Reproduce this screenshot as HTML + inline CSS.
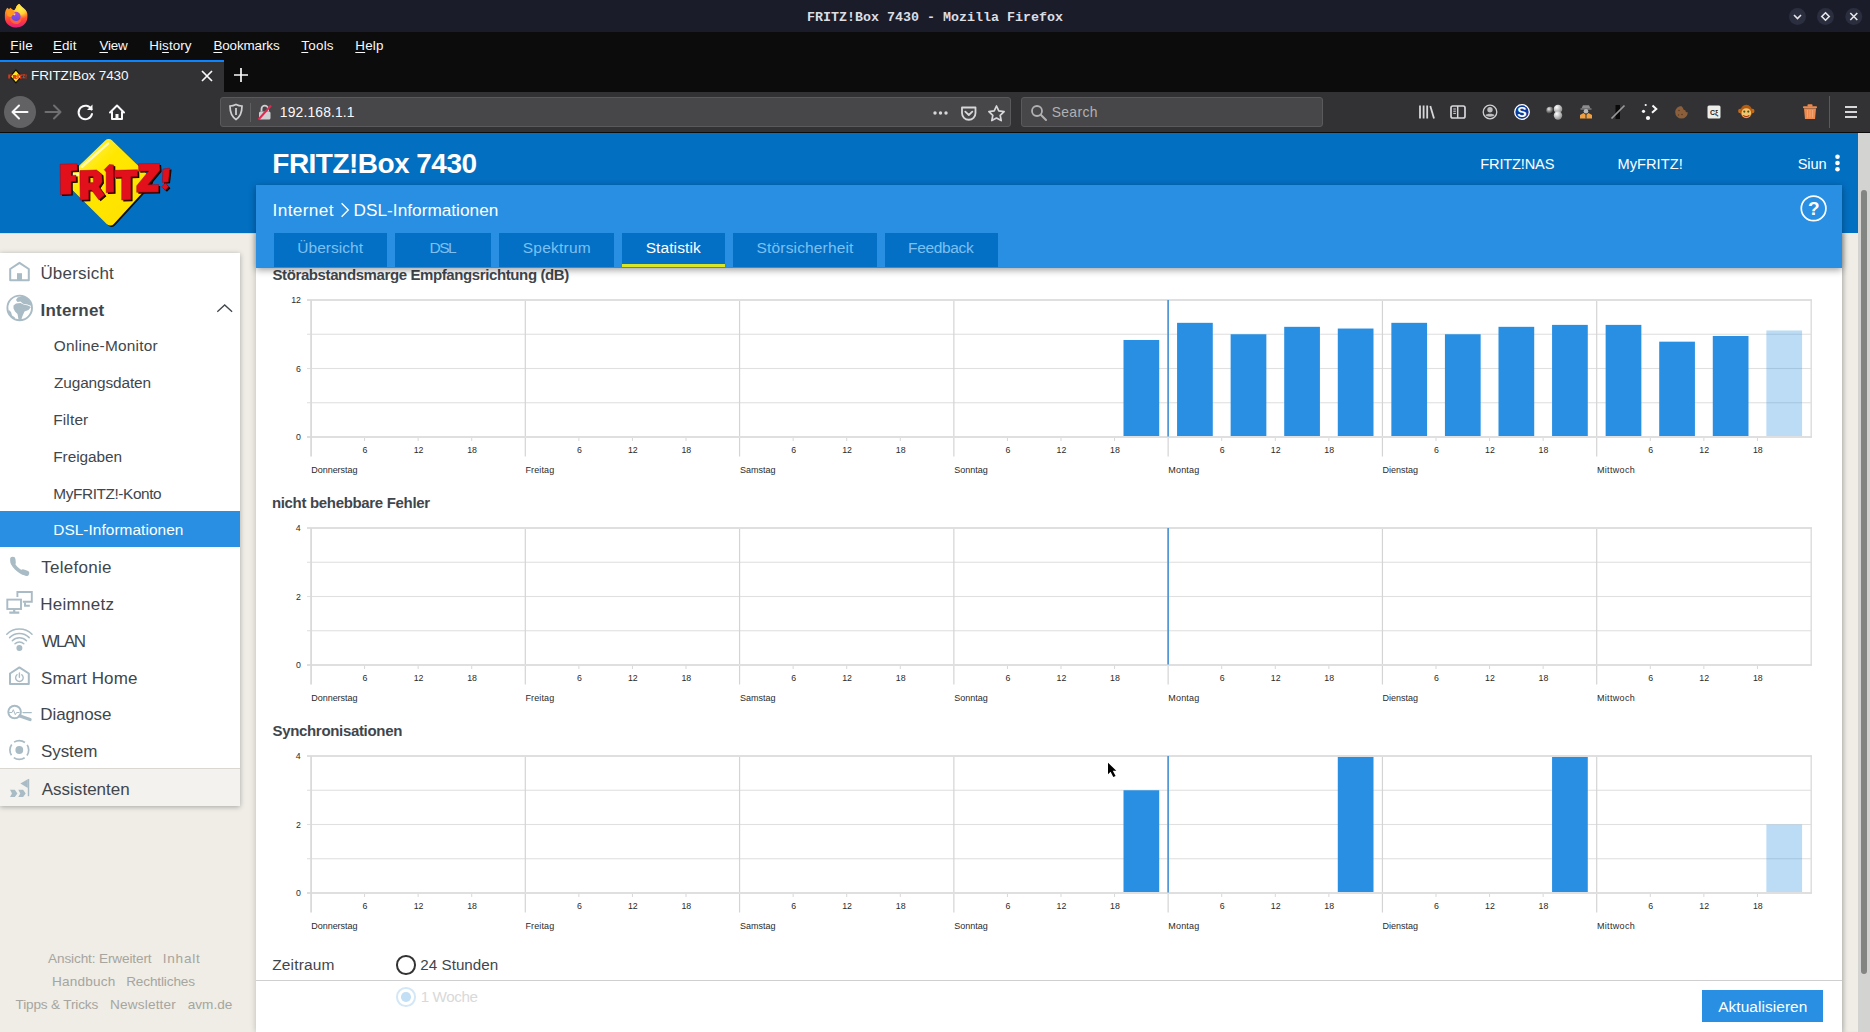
<!DOCTYPE html>
<html lang="de">
<head>
<meta charset="utf-8">
<title>FRITZ!Box 7430</title>
<style>
*{box-sizing:border-box;margin:0;padding:0}
html,body{width:1870px;height:1032px;overflow:hidden;background:#efede6;font-family:"Liberation Sans",sans-serif;}
body{position:relative}
.abs{position:absolute}
/* ---------- window chrome ---------- */
#titlebar{position:absolute;left:0;top:0;width:1870px;height:32px;background:#1a1c2a;}
#titlebar .t{position:absolute;left:0;width:1870px;top:0;height:32px;line-height:35px;text-align:center;color:#dddde4;font-family:"Liberation Mono",monospace;font-weight:bold;font-size:13.3px;letter-spacing:0.02px}
#menubar{position:absolute;left:0;top:32px;width:1870px;height:28px;background:#0c0c0d;color:#f9f9fa;font-size:14.5px}
#menubar span{position:absolute;top:0;line-height:27px;white-space:nowrap}
.tx u{text-decoration:underline;text-underline-offset:1.500px;text-decoration-thickness:1px}
#tabbar{position:absolute;left:0;top:60px;width:1870px;height:32px;background:#0c0c0d}
#tab{position:absolute;left:0;top:0;width:224px;height:32px;background:#323234;border-top:2px solid #0a84ff;color:#f9f9fa;font-size:14.5px}
#navbar{position:absolute;left:0;top:92px;width:1870px;height:40px;background:#323234}
#navline{position:absolute;left:0;top:132px;width:1870px;height:1px;background:#0c0c0d}
.field{position:absolute;top:5px;height:30px;background:#474749;border:1px solid #5a5a5d;border-radius:3px;color:#f9f9fa;font-size:14.5px}
/* ---------- page ---------- */
.tx{position:absolute;white-space:nowrap}
#hdr{position:absolute;left:0;top:133px;width:1858px;height:100px;background:#036fc1}
#rightbg{position:absolute;left:1842px;top:233px;width:16px;height:799px;background:#efede6;box-shadow:inset 4px 0 4px -2px rgba(0,0,0,.12)}
#content{position:absolute;left:256px;top:233px;width:1586px;height:799px;background:#fff;box-shadow:0 0 6px rgba(0,0,0,.22)}
#sub{position:absolute;left:256px;top:185px;width:1586px;height:82.500px;background:#288fe2;box-shadow:0 2px 7px rgba(0,0,0,.38)}
#foot{position:absolute;left:256px;top:980px;width:1586px;height:52px;background:rgba(255,255,255,.82);border-top:1px solid #cfcfcf}
#side{position:absolute;left:0;top:253px;width:240px;height:553px;background:#fff;box-shadow:0 1px 5px rgba(0,0,0,.30)}
#scroll{position:absolute;left:1858px;top:133px;width:12px;height:899px;background:#d3d3d2}
#thumb{position:absolute;left:1861px;top:190px;width:6.200px;height:784px;background:#838582;border-radius:3.100px}
</style>
</head>
<body>

<!-- ===== window title bar ===== -->
<div id="titlebar">
  <svg class="abs" style="left:0;top:0" width="40" height="32" viewBox="0 0 1290 1032">
    <defs>
      <linearGradient id="ffb" x1="0" y1="0" x2="0" y2="1"><stop offset="0" stop-color="#ffb01f"/><stop offset=".35" stop-color="#ff8a1f"/><stop offset=".7" stop-color="#ff3b3f"/><stop offset="1" stop-color="#e01a8a"/></linearGradient>
      <radialGradient id="ffy" cx="660" cy="280" r="330" gradientUnits="userSpaceOnUse"><stop offset="0" stop-color="#fff14a"/><stop offset=".55" stop-color="#ffd83a" stop-opacity=".9"/><stop offset="1" stop-color="#ffb030" stop-opacity="0"/></radialGradient>
      <linearGradient id="ffp" x1="0" y1="0" x2="0" y2="1"><stop offset="0" stop-color="#b845d8"/><stop offset="1" stop-color="#5a4fe6"/></linearGradient>
      <clipPath id="ffc"><path d="M620 118C660 190 760 250 830 330C880 400 900 480 890 560C870 760 710 895 520 892C310 888 150 740 150 540C150 440 170 350 205 290L240 250L290 295L335 250L395 305L445 332C480 320 505 290 515 250C525 195 570 150 620 118Z"/></clipPath>
    </defs>
    <g clip-path="url(#ffc)">
      <rect x="100" y="80" width="850" height="850" fill="url(#ffb)"/>
      <rect x="100" y="80" width="850" height="850" fill="url(#ffy)"/>
      <circle cx="515" cy="530" r="150" fill="url(#ffp)"/>
      <path d="M200 330L420 330L500 440L470 480C420 470 380 500 360 560L240 520Z" fill="#ff9a1c"/>
      <path d="M430 470L505 445L470 500Z" fill="#ffd0c0"/>
      <path d="M360 560C380 640 450 690 540 680C640 670 690 600 680 500C720 600 690 740 560 770C440 790 340 720 320 600Z" fill="#ff6a38" opacity=".85"/>
    </g>
  </svg>
  <div class="t">FRITZ!Box 7430 - Mozilla Firefox</div>
  <svg class="abs" style="left:1788px;top:7px" width="78" height="19" viewBox="0 0 78 19">
    <circle cx="9.500" cy="9.500" r="8.500" fill="#2b2e3e"/><circle cx="37.500" cy="9.500" r="8.500" fill="#2b2e3e"/><circle cx="65.800" cy="9.500" r="8.500" fill="#2b2e3e"/>
    <path d="M6 8l3.500 3.500L13 8" fill="none" stroke="#e6e6ea" stroke-width="1.600"/>
    <path d="M37.500 5.800l3.700 3.700l-3.700 3.700l-3.700-3.700z" fill="none" stroke="#e6e6ea" stroke-width="1.600"/>
    <path d="M62.300 6l7 7M69.300 6l-7 7" fill="none" stroke="#e6e6ea" stroke-width="1.600"/>
  </svg>
</div>
<!-- ===== menu bar ===== -->
<div id="menubar"></div>
<!-- ===== tab bar ===== -->
<div id="tabbar">
  <div id="tab">
    <svg class="abs" style="left:6px;top:6px" width="22" height="18" viewBox="6 68 22 18">
      <path d="M15.900 69.900L21.500 76.400L15.900 82.900L10.300 76.400Z" fill="#ffe61e" stroke="#0a0a0a" stroke-width="1.200" stroke-linejoin="round"/>
      <path d="M8.300 74.500h4.200v1h-2.600v.9h2v.9h-2v1.300h-1.600zM13 75h3.200l.7 1.600l-.8.900l1.100 1.500h-1.700l-.9-1.300v1.300H13zM17.300 74.200h1.400v4.300h-1.400zM19 74.600h3.500v1.100h-1v3h-1.500v-3H19zM22.700 74.300h2.600l-1.500 3h1.400v1h-3l1.500-3h-1zM25.600 74.500h1l-.2 2.500h-.7zM25.600 77.500h.9v.9h-.9z" fill="#e23a1a"/>
    </svg>
    <svg class="abs" style="left:201px;top:8px" width="12" height="12" viewBox="0 0 12 12"><path d="M1 1l10 10M11 1L1 11" stroke="#f9f9fa" stroke-width="1.700" fill="none"/></svg>
  </div>
  <svg class="abs" style="left:233px;top:7px" width="16" height="16" viewBox="0 0 16 16"><path d="M8 1v14M1 8h14" stroke="#f9f9fa" stroke-width="1.700" fill="none"/></svg>
</div>
<!-- ===== nav bar ===== -->
<div id="navbar">
  <svg class="abs" style="left:0;top:0" width="140" height="40" viewBox="0 0 140 40">
    <circle cx="20" cy="20" r="16" fill="#626265"/>
    <path d="M27.500 20H13M19 13.500L12.500 20L19 26.500" fill="none" stroke="#f9f9fa" stroke-width="2" stroke-linecap="round" stroke-linejoin="round"/>
    <path d="M45.500 20H60M54 13.500L60.500 20L54 26.500" fill="none" stroke="#6f6f72" stroke-width="2" stroke-linecap="round" stroke-linejoin="round"/>
    <path d="M91.500 17.500A6.800 6.800 0 1 0 92 22" fill="none" stroke="#f9f9fa" stroke-width="2" stroke-linecap="round"/>
    <path d="M92.500 12.500v5.500h-5.500z" fill="#f9f9fa"/>
    <path d="M110 20.500L117 13.500L124 20.500M112 19.500V27h10V19.500" fill="none" stroke="#f9f9fa" stroke-width="2" stroke-linecap="round" stroke-linejoin="round"/>
    <rect x="115.500" y="22" width="3" height="5" fill="#f9f9fa"/>
  </svg>
  <div class="field" style="left:220px;width:791px">
    <svg class="abs" style="left:6px;top:5px" width="60" height="19" viewBox="0 0 60 19">
      <path d="M9 1.500c2 1 4 1.500 6 1.500c0 6-1.500 10.500-6 13.500C4.500 13.500 3 9 3 3c2 0 4-0.500 6-1.500z" fill="none" stroke="#cfcfd2" stroke-width="1.700"/>
      <path d="M9 5v7" stroke="#cfcfd2" stroke-width="1.800"/>
      <path d="M23.500 0v19" stroke="#5f5f62" stroke-width="1"/>
      <rect x="32" y="8.500" width="11.500" height="8" rx="1.500" fill="#cfcfd2"/>
      <path d="M34.500 8.500V6a3.300 3.300 0 0 1 6.600 0v2.500" fill="none" stroke="#cfcfd2" stroke-width="1.800"/>
      <path d="M31.500 16.500L44 2.500" stroke="#e22850" stroke-width="2"/>
    </svg>
    <svg class="abs" style="left:708px;top:5px" width="80" height="20" viewBox="0 0 80 20">
      <circle cx="6" cy="10" r="1.700" fill="#d7d7db"/><circle cx="11.500" cy="10" r="1.700" fill="#d7d7db"/><circle cx="17" cy="10" r="1.700" fill="#d7d7db"/>
      <path d="M33 4.500h13.500v5.500a6.750 6.750 0 0 1-13.500 0z" fill="none" stroke="#d7d7db" stroke-width="1.800" stroke-linejoin="round"/>
      <path d="M36.300 8.700l3.500 3.300l3.500-3.300" fill="none" stroke="#d7d7db" stroke-width="1.800" stroke-linecap="round" stroke-linejoin="round"/>
      <path d="M67.500 3l2.300 4.900l5.300.7l-3.900 3.700l1 5.300l-4.700-2.600l-4.700 2.600l1-5.300l-3.900-3.700l5.300-.7z" fill="none" stroke="#d7d7db" stroke-width="1.700" stroke-linejoin="round"/>
    </svg>
  </div>
  <div class="field" style="left:1021px;width:302px">
    <svg class="abs" style="left:8px;top:6px" width="18" height="18" viewBox="0 0 18 18"><circle cx="7" cy="7" r="5" fill="none" stroke="#b1b1b3" stroke-width="1.800"/><path d="M10.800 10.800L16 16" stroke="#b1b1b3" stroke-width="2" stroke-linecap="round"/></svg>
  </div>

  <!-- right toolbar icons; svg origin at x=1410,y=96 (navbar top=92 => top:4px) -->
  <svg class="abs" style="left:1410px;top:4px" width="460" height="32" viewBox="0 0 460 32">
    <defs>
      <radialGradient id="ball1" cx="35%" cy="30%" r="70%"><stop offset="0" stop-color="#e8e8e8"/><stop offset="1" stop-color="#222"/></radialGradient>
      <radialGradient id="ball2" cx="35%" cy="30%" r="75%"><stop offset="0" stop-color="#ffffff"/><stop offset="1" stop-color="#8a8a8a"/></radialGradient>
    </defs>
    <!-- library -->
    <path d="M10 9.500v13M13.600 9.500v13M17.200 9.500v13" stroke="#d7d7db" stroke-width="1.800"/>
    <path d="M20.300 10l3.700 12.500" stroke="#d7d7db" stroke-width="1.800"/>
    <!-- sidebar -->
    <rect x="41" y="10" width="14" height="12" rx="1.800" fill="none" stroke="#d7d7db" stroke-width="1.700"/>
    <path d="M47.700 10v12" stroke="#d7d7db" stroke-width="1.500"/>
    <path d="M43.300 13h2.600M43.300 15.200h2.600M43.300 17.400h2.600" stroke="#d7d7db" stroke-width="1"/>
    <!-- account -->
    <circle cx="80" cy="16" r="6.800" fill="none" stroke="#cfcfd2" stroke-width="1.300"/>
    <circle cx="80" cy="13.800" r="2.700" fill="#bdbdc0"/>
    <path d="M75.400 19.200c1.200-2 8-2 9.200 0c-1 1.900-8.200 1.900-9.200 0z" fill="#bdbdc0"/>
    <!-- S -->
    <circle cx="112" cy="16" r="7.300" fill="#0d3b9c" stroke="#fff" stroke-width="1.300"/>
    <text x="112" y="21" text-anchor="middle" font-family="Liberation Sans" font-weight="bold" font-size="14" fill="#fff">S</text>
    <!-- balls -->
    <circle cx="148" cy="13" r="4.300" fill="url(#ball2)"/>
    <circle cx="140" cy="14.500" r="3.700" fill="url(#ball1)"/>
    <circle cx="148" cy="19.500" r="4.200" fill="url(#ball2)"/>
    <!-- spy -->
    <path d="M171.500 12.500h9l-1.500-3.200h-6z" fill="#8d8d90"/>
    <rect x="170.500" y="12.200" width="11" height="1.600" fill="#77777a"/>
    <circle cx="176" cy="15.200" r="2.300" fill="#b9b9bb"/>
    <path d="M170 22.500v-3.500l3.500-2l2.500 2l2.500-2l3.500 2v3.500z" fill="#f0a040"/>
    <path d="M176 18.500v4" stroke="#323234" stroke-width="1"/>
    <!-- slash -->
    <rect x="205.500" y="9" width="4.500" height="14" fill="#0a0a0a"/>
    <path d="M201.500 22.500L214.500 9.500" stroke="#98989b" stroke-width="1.700"/>
    <!-- arrow dots -->
    <circle cx="235.700" cy="9" r="1.100" fill="#f9f9fa"/>
    <circle cx="233.500" cy="15.300" r="1.600" fill="#f9f9fa"/>
    <circle cx="238" cy="22" r="2.100" fill="#f9f9fa"/>
    <path d="M242.500 9.500l3.800 3.500l-4.300 3.800" fill="none" stroke="#f9f9fa" stroke-width="2"/>
    <!-- cookie -->
    <path d="M271.500 10a6.300 6.300 0 1 0 6.300 6.300c-1.600.3-2.600-.8-2.400-2.100c-1.500.1-2.600-1-2.300-2.600c-.9-.2-1.500-.8-1.600-1.600z" fill="#8b5e3c"/>
    <circle cx="269" cy="14.500" r=".8" fill="#5c3b22"/><circle cx="272" cy="18.500" r=".8" fill="#5c3b22"/><circle cx="268.500" cy="19" r=".7" fill="#5c3b22"/>
    <!-- CE -->
    <rect x="297.500" y="9.500" width="13" height="13" rx="1.500" fill="#ecece8"/>
    <text x="304" y="18.500" text-anchor="middle" font-family="Liberation Sans" font-weight="bold" font-size="7" fill="#222">C&#958;</text>
    <!-- monkey -->
    <circle cx="330.300" cy="15" r="2.200" fill="#c96a14"/><circle cx="342.300" cy="15" r="2.200" fill="#c96a14"/>
    <ellipse cx="336.300" cy="15.500" rx="6" ry="6.800" fill="#b65a10"/>
    <ellipse cx="336.300" cy="17" rx="4.800" ry="4.800" fill="#f6c36a"/>
    <circle cx="334.300" cy="15.600" r="1.100" fill="#3a5a22"/><circle cx="338.300" cy="15.600" r="1.100" fill="#3a5a22"/>
    <path d="M333.300 19.300c1.600 1.500 4.400 1.500 6 0" fill="none" stroke="#a03010" stroke-width="1.100"/>
    <!-- trash -->
    <path d="M394 12.500h12l-1 10.500h-10z" fill="#ee8a4e"/>
    <rect x="393" y="10.300" width="14" height="2" rx=".8" fill="#ee8a4e"/>
    <rect x="397.500" y="8.300" width="5" height="2.500" rx=".8" fill="#ee8a4e"/>
    <path d="M397.500 14v7.500M400 14v7.500M402.500 14v7.500" stroke="#f4a777" stroke-width=".9"/>
    <!-- separator -->
    <path d="M419.500 0v32" stroke="#5a5a5d" stroke-width="1"/>
    <!-- hamburger -->
    <path d="M435 11h12M435 16h12M435 21h12" stroke="#d7d7db" stroke-width="1.800"/>
  </svg>
</div>
<div id="navline"></div>

<div id="hdr"></div>
<div class="abs" style="left:0;top:232.600px;width:256px;height:1px;background:#bfe3f4"></div>
<div id="rightbg"></div>
<div id="content"></div>
<svg class="abs" style="left:0;top:0" width="1870" height="1032" viewBox="0 0 1870 1032"><rect x="307.0" y="333.70" width="1504.0" height="1.1" fill="#e0e0e0"/><rect x="307.0" y="367.95" width="1504.0" height="1.1" fill="#e0e0e0"/><rect x="307.0" y="402.20" width="1504.0" height="1.1" fill="#e0e0e0"/><rect x="524.69" y="300" width="1.2" height="156.5" fill="#d4d4d4"/><rect x="738.97" y="300" width="1.2" height="156.5" fill="#d4d4d4"/><rect x="953.26" y="300" width="1.2" height="156.5" fill="#d4d4d4"/><rect x="1167.54" y="300" width="1.2" height="156.5" fill="#d4d4d4"/><rect x="1381.83" y="300" width="1.2" height="156.5" fill="#d4d4d4"/><rect x="1596.11" y="300" width="1.2" height="156.5" fill="#d4d4d4"/><rect x="364.07" y="437.0" width="1" height="4" fill="#d8d8d8"/><rect x="417.64" y="437.0" width="1" height="4" fill="#d8d8d8"/><rect x="471.21" y="437.0" width="1" height="4" fill="#d8d8d8"/><rect x="578.36" y="437.0" width="1" height="4" fill="#d8d8d8"/><rect x="631.93" y="437.0" width="1" height="4" fill="#d8d8d8"/><rect x="685.50" y="437.0" width="1" height="4" fill="#d8d8d8"/><rect x="792.64" y="437.0" width="1" height="4" fill="#d8d8d8"/><rect x="846.21" y="437.0" width="1" height="4" fill="#d8d8d8"/><rect x="899.79" y="437.0" width="1" height="4" fill="#d8d8d8"/><rect x="1006.93" y="437.0" width="1" height="4" fill="#d8d8d8"/><rect x="1060.50" y="437.0" width="1" height="4" fill="#d8d8d8"/><rect x="1114.07" y="437.0" width="1" height="4" fill="#d8d8d8"/><rect x="1221.21" y="437.0" width="1" height="4" fill="#d8d8d8"/><rect x="1274.79" y="437.0" width="1" height="4" fill="#d8d8d8"/><rect x="1328.36" y="437.0" width="1" height="4" fill="#d8d8d8"/><rect x="1435.50" y="437.0" width="1" height="4" fill="#d8d8d8"/><rect x="1489.07" y="437.0" width="1" height="4" fill="#d8d8d8"/><rect x="1542.64" y="437.0" width="1" height="4" fill="#d8d8d8"/><rect x="1649.79" y="437.0" width="1" height="4" fill="#d8d8d8"/><rect x="1703.36" y="437.0" width="1" height="4" fill="#d8d8d8"/><rect x="1756.93" y="437.0" width="1" height="4" fill="#d8d8d8"/><rect x="1123.50" y="339.96" width="35.71" height="97.04" fill="#288fe2"/><rect x="1177.07" y="322.83" width="35.71" height="114.17" fill="#288fe2"/><rect x="1230.64" y="334.25" width="35.71" height="102.75" fill="#288fe2"/><rect x="1284.21" y="326.83" width="35.71" height="110.17" fill="#288fe2"/><rect x="1337.79" y="328.54" width="35.71" height="108.46" fill="#288fe2"/><rect x="1391.36" y="322.83" width="35.71" height="114.17" fill="#288fe2"/><rect x="1444.93" y="334.25" width="35.71" height="102.75" fill="#288fe2"/><rect x="1498.50" y="326.83" width="35.71" height="110.17" fill="#288fe2"/><rect x="1552.07" y="324.89" width="35.71" height="112.11" fill="#288fe2"/><rect x="1605.64" y="324.89" width="35.71" height="112.11" fill="#288fe2"/><rect x="1659.21" y="341.67" width="35.71" height="95.33" fill="#288fe2"/><rect x="1712.79" y="335.96" width="35.71" height="101.04" fill="#288fe2"/><rect x="1766.36" y="330.48" width="35.71" height="106.52" fill="#288fe2" fill-opacity=".31"/><rect x="307.0" y="299.00" width="1505.0" height="2" fill="#dfdfdf"/><rect x="307.0" y="436.00" width="1505.0" height="2" fill="#dfdfdf"/><rect x="310.2" y="300" width="1.8" height="156.5" fill="#dadada"/><rect x="1810.5" y="300" width="1.4" height="137.0" fill="#dcdcdc"/><rect x="1167.34" y="300" width="1.6" height="136.5" fill="#4a94d6"/><rect x="307.0" y="561.70" width="1504.0" height="1.1" fill="#e0e0e0"/><rect x="307.0" y="595.95" width="1504.0" height="1.1" fill="#e0e0e0"/><rect x="307.0" y="630.20" width="1504.0" height="1.1" fill="#e0e0e0"/><rect x="524.69" y="528" width="1.2" height="156.5" fill="#d4d4d4"/><rect x="738.97" y="528" width="1.2" height="156.5" fill="#d4d4d4"/><rect x="953.26" y="528" width="1.2" height="156.5" fill="#d4d4d4"/><rect x="1167.54" y="528" width="1.2" height="156.5" fill="#d4d4d4"/><rect x="1381.83" y="528" width="1.2" height="156.5" fill="#d4d4d4"/><rect x="1596.11" y="528" width="1.2" height="156.5" fill="#d4d4d4"/><rect x="364.07" y="665.0" width="1" height="4" fill="#d8d8d8"/><rect x="417.64" y="665.0" width="1" height="4" fill="#d8d8d8"/><rect x="471.21" y="665.0" width="1" height="4" fill="#d8d8d8"/><rect x="578.36" y="665.0" width="1" height="4" fill="#d8d8d8"/><rect x="631.93" y="665.0" width="1" height="4" fill="#d8d8d8"/><rect x="685.50" y="665.0" width="1" height="4" fill="#d8d8d8"/><rect x="792.64" y="665.0" width="1" height="4" fill="#d8d8d8"/><rect x="846.21" y="665.0" width="1" height="4" fill="#d8d8d8"/><rect x="899.79" y="665.0" width="1" height="4" fill="#d8d8d8"/><rect x="1006.93" y="665.0" width="1" height="4" fill="#d8d8d8"/><rect x="1060.50" y="665.0" width="1" height="4" fill="#d8d8d8"/><rect x="1114.07" y="665.0" width="1" height="4" fill="#d8d8d8"/><rect x="1221.21" y="665.0" width="1" height="4" fill="#d8d8d8"/><rect x="1274.79" y="665.0" width="1" height="4" fill="#d8d8d8"/><rect x="1328.36" y="665.0" width="1" height="4" fill="#d8d8d8"/><rect x="1435.50" y="665.0" width="1" height="4" fill="#d8d8d8"/><rect x="1489.07" y="665.0" width="1" height="4" fill="#d8d8d8"/><rect x="1542.64" y="665.0" width="1" height="4" fill="#d8d8d8"/><rect x="1649.79" y="665.0" width="1" height="4" fill="#d8d8d8"/><rect x="1703.36" y="665.0" width="1" height="4" fill="#d8d8d8"/><rect x="1756.93" y="665.0" width="1" height="4" fill="#d8d8d8"/><rect x="307.0" y="527.00" width="1505.0" height="2" fill="#dfdfdf"/><rect x="307.0" y="664.00" width="1505.0" height="2" fill="#dfdfdf"/><rect x="310.2" y="528" width="1.8" height="156.5" fill="#dadada"/><rect x="1810.5" y="528" width="1.4" height="137.0" fill="#dcdcdc"/><rect x="1167.34" y="528" width="1.6" height="136.5" fill="#4a94d6"/><rect x="307.0" y="789.70" width="1504.0" height="1.1" fill="#e0e0e0"/><rect x="307.0" y="823.95" width="1504.0" height="1.1" fill="#e0e0e0"/><rect x="307.0" y="858.20" width="1504.0" height="1.1" fill="#e0e0e0"/><rect x="524.69" y="756" width="1.2" height="156.5" fill="#d4d4d4"/><rect x="738.97" y="756" width="1.2" height="156.5" fill="#d4d4d4"/><rect x="953.26" y="756" width="1.2" height="156.5" fill="#d4d4d4"/><rect x="1167.54" y="756" width="1.2" height="156.5" fill="#d4d4d4"/><rect x="1381.83" y="756" width="1.2" height="156.5" fill="#d4d4d4"/><rect x="1596.11" y="756" width="1.2" height="156.5" fill="#d4d4d4"/><rect x="364.07" y="893.0" width="1" height="4" fill="#d8d8d8"/><rect x="417.64" y="893.0" width="1" height="4" fill="#d8d8d8"/><rect x="471.21" y="893.0" width="1" height="4" fill="#d8d8d8"/><rect x="578.36" y="893.0" width="1" height="4" fill="#d8d8d8"/><rect x="631.93" y="893.0" width="1" height="4" fill="#d8d8d8"/><rect x="685.50" y="893.0" width="1" height="4" fill="#d8d8d8"/><rect x="792.64" y="893.0" width="1" height="4" fill="#d8d8d8"/><rect x="846.21" y="893.0" width="1" height="4" fill="#d8d8d8"/><rect x="899.79" y="893.0" width="1" height="4" fill="#d8d8d8"/><rect x="1006.93" y="893.0" width="1" height="4" fill="#d8d8d8"/><rect x="1060.50" y="893.0" width="1" height="4" fill="#d8d8d8"/><rect x="1114.07" y="893.0" width="1" height="4" fill="#d8d8d8"/><rect x="1221.21" y="893.0" width="1" height="4" fill="#d8d8d8"/><rect x="1274.79" y="893.0" width="1" height="4" fill="#d8d8d8"/><rect x="1328.36" y="893.0" width="1" height="4" fill="#d8d8d8"/><rect x="1435.50" y="893.0" width="1" height="4" fill="#d8d8d8"/><rect x="1489.07" y="893.0" width="1" height="4" fill="#d8d8d8"/><rect x="1542.64" y="893.0" width="1" height="4" fill="#d8d8d8"/><rect x="1649.79" y="893.0" width="1" height="4" fill="#d8d8d8"/><rect x="1703.36" y="893.0" width="1" height="4" fill="#d8d8d8"/><rect x="1756.93" y="893.0" width="1" height="4" fill="#d8d8d8"/><rect x="1123.50" y="790.25" width="35.71" height="102.75" fill="#288fe2"/><rect x="1337.79" y="756.00" width="35.71" height="137.00" fill="#288fe2"/><rect x="1552.07" y="756.00" width="35.71" height="137.00" fill="#288fe2"/><rect x="1766.36" y="824.50" width="35.71" height="68.50" fill="#288fe2" fill-opacity=".31"/><rect x="307.0" y="755.00" width="1505.0" height="2" fill="#dfdfdf"/><rect x="307.0" y="892.00" width="1505.0" height="2" fill="#dfdfdf"/><rect x="310.2" y="756" width="1.8" height="156.5" fill="#dadada"/><rect x="1810.5" y="756" width="1.4" height="137.0" fill="#dcdcdc"/><rect x="1167.34" y="756" width="1.6" height="136.5" fill="#4a94d6"/></svg>
<div class="tx" style="left:291.15px;top:290px;line-height:20px;font-size:8.8px;color:#2b2b2b;">12</div><div class="tx" style="left:295.99px;top:359px;line-height:20px;font-size:8.8px;color:#2b2b2b;">6</div><div class="tx" style="left:295.94px;top:427px;line-height:20px;font-size:8.8px;color:#2b2b2b;">0</div><div class="tx" style="left:362.59px;top:440px;line-height:20px;font-size:8.8px;color:#2b2b2b;">6</div><div class="tx" style="left:413.64px;top:440px;line-height:20px;font-size:8.8px;color:#2b2b2b;">12</div><div class="tx" style="left:467.18px;top:440px;line-height:20px;font-size:8.8px;color:#2b2b2b;">18</div><div class="tx" style="left:576.88px;top:440px;line-height:20px;font-size:8.8px;color:#2b2b2b;">6</div><div class="tx" style="left:627.92px;top:440px;line-height:20px;font-size:8.8px;color:#2b2b2b;">12</div><div class="tx" style="left:681.46px;top:440px;line-height:20px;font-size:8.8px;color:#2b2b2b;">18</div><div class="tx" style="left:791.17px;top:440px;line-height:20px;font-size:8.8px;color:#2b2b2b;">6</div><div class="tx" style="left:842.21px;top:440px;line-height:20px;font-size:8.8px;color:#2b2b2b;">12</div><div class="tx" style="left:895.75px;top:440px;line-height:20px;font-size:8.8px;color:#2b2b2b;">18</div><div class="tx" style="left:1005.45px;top:440px;line-height:20px;font-size:8.8px;color:#2b2b2b;">6</div><div class="tx" style="left:1056.49px;top:440px;line-height:20px;font-size:8.8px;color:#2b2b2b;">12</div><div class="tx" style="left:1110.03px;top:440px;line-height:20px;font-size:8.8px;color:#2b2b2b;">18</div><div class="tx" style="left:1219.74px;top:440px;line-height:20px;font-size:8.8px;color:#2b2b2b;">6</div><div class="tx" style="left:1270.78px;top:440px;line-height:20px;font-size:8.8px;color:#2b2b2b;">12</div><div class="tx" style="left:1324.32px;top:440px;line-height:20px;font-size:8.8px;color:#2b2b2b;">18</div><div class="tx" style="left:1434.02px;top:440px;line-height:20px;font-size:8.8px;color:#2b2b2b;">6</div><div class="tx" style="left:1485.06px;top:440px;line-height:20px;font-size:8.8px;color:#2b2b2b;">12</div><div class="tx" style="left:1538.60px;top:440px;line-height:20px;font-size:8.8px;color:#2b2b2b;">18</div><div class="tx" style="left:1648.31px;top:440px;line-height:20px;font-size:8.8px;color:#2b2b2b;">6</div><div class="tx" style="left:1699.35px;top:440px;line-height:20px;font-size:8.8px;color:#2b2b2b;">12</div><div class="tx" style="left:1752.89px;top:440px;line-height:20px;font-size:8.8px;color:#2b2b2b;">18</div><div class="tx" style="left:311.16px;top:460px;line-height:20px;font-size:9px;color:#2b2b2b;letter-spacing:-0.011px;">Donnerstag</div><div class="tx" style="left:525.45px;top:460px;line-height:20px;font-size:9px;color:#2b2b2b;letter-spacing:0.115px;">Freitag</div><div class="tx" style="left:740.07px;top:460px;line-height:20px;font-size:9px;color:#2b2b2b;letter-spacing:-0.010px;">Samstag</div><div class="tx" style="left:954.35px;top:460px;line-height:20px;font-size:9px;color:#2b2b2b;letter-spacing:-0.006px;">Sonntag</div><div class="tx" style="left:1168.30px;top:460px;line-height:20px;font-size:9px;color:#2b2b2b;letter-spacing:0.170px;">Montag</div><div class="tx" style="left:1382.59px;top:460px;line-height:20px;font-size:9px;color:#2b2b2b;letter-spacing:-0.018px;">Dienstag</div><div class="tx" style="left:1596.88px;top:460px;line-height:20px;font-size:9px;color:#2b2b2b;letter-spacing:0.350px;">Mittwoch</div><div class="tx" style="left:295.86px;top:518px;line-height:20px;font-size:8.8px;color:#2b2b2b;">4</div><div class="tx" style="left:296.05px;top:587px;line-height:20px;font-size:8.8px;color:#2b2b2b;">2</div><div class="tx" style="left:295.94px;top:655px;line-height:20px;font-size:8.8px;color:#2b2b2b;">0</div><div class="tx" style="left:362.59px;top:668px;line-height:20px;font-size:8.8px;color:#2b2b2b;">6</div><div class="tx" style="left:413.64px;top:668px;line-height:20px;font-size:8.8px;color:#2b2b2b;">12</div><div class="tx" style="left:467.18px;top:668px;line-height:20px;font-size:8.8px;color:#2b2b2b;">18</div><div class="tx" style="left:576.88px;top:668px;line-height:20px;font-size:8.8px;color:#2b2b2b;">6</div><div class="tx" style="left:627.92px;top:668px;line-height:20px;font-size:8.8px;color:#2b2b2b;">12</div><div class="tx" style="left:681.46px;top:668px;line-height:20px;font-size:8.8px;color:#2b2b2b;">18</div><div class="tx" style="left:791.17px;top:668px;line-height:20px;font-size:8.8px;color:#2b2b2b;">6</div><div class="tx" style="left:842.21px;top:668px;line-height:20px;font-size:8.8px;color:#2b2b2b;">12</div><div class="tx" style="left:895.75px;top:668px;line-height:20px;font-size:8.8px;color:#2b2b2b;">18</div><div class="tx" style="left:1005.45px;top:668px;line-height:20px;font-size:8.8px;color:#2b2b2b;">6</div><div class="tx" style="left:1056.49px;top:668px;line-height:20px;font-size:8.8px;color:#2b2b2b;">12</div><div class="tx" style="left:1110.03px;top:668px;line-height:20px;font-size:8.8px;color:#2b2b2b;">18</div><div class="tx" style="left:1219.74px;top:668px;line-height:20px;font-size:8.8px;color:#2b2b2b;">6</div><div class="tx" style="left:1270.78px;top:668px;line-height:20px;font-size:8.8px;color:#2b2b2b;">12</div><div class="tx" style="left:1324.32px;top:668px;line-height:20px;font-size:8.8px;color:#2b2b2b;">18</div><div class="tx" style="left:1434.02px;top:668px;line-height:20px;font-size:8.8px;color:#2b2b2b;">6</div><div class="tx" style="left:1485.06px;top:668px;line-height:20px;font-size:8.8px;color:#2b2b2b;">12</div><div class="tx" style="left:1538.60px;top:668px;line-height:20px;font-size:8.8px;color:#2b2b2b;">18</div><div class="tx" style="left:1648.31px;top:668px;line-height:20px;font-size:8.8px;color:#2b2b2b;">6</div><div class="tx" style="left:1699.35px;top:668px;line-height:20px;font-size:8.8px;color:#2b2b2b;">12</div><div class="tx" style="left:1752.89px;top:668px;line-height:20px;font-size:8.8px;color:#2b2b2b;">18</div><div class="tx" style="left:311.16px;top:688px;line-height:20px;font-size:9px;color:#2b2b2b;letter-spacing:-0.011px;">Donnerstag</div><div class="tx" style="left:525.45px;top:688px;line-height:20px;font-size:9px;color:#2b2b2b;letter-spacing:0.115px;">Freitag</div><div class="tx" style="left:740.07px;top:688px;line-height:20px;font-size:9px;color:#2b2b2b;letter-spacing:-0.010px;">Samstag</div><div class="tx" style="left:954.35px;top:688px;line-height:20px;font-size:9px;color:#2b2b2b;letter-spacing:-0.006px;">Sonntag</div><div class="tx" style="left:1168.30px;top:688px;line-height:20px;font-size:9px;color:#2b2b2b;letter-spacing:0.170px;">Montag</div><div class="tx" style="left:1382.59px;top:688px;line-height:20px;font-size:9px;color:#2b2b2b;letter-spacing:-0.018px;">Dienstag</div><div class="tx" style="left:1596.88px;top:688px;line-height:20px;font-size:9px;color:#2b2b2b;letter-spacing:0.350px;">Mittwoch</div><div class="tx" style="left:295.86px;top:746px;line-height:20px;font-size:8.8px;color:#2b2b2b;">4</div><div class="tx" style="left:296.05px;top:815px;line-height:20px;font-size:8.8px;color:#2b2b2b;">2</div><div class="tx" style="left:295.94px;top:883px;line-height:20px;font-size:8.8px;color:#2b2b2b;">0</div><div class="tx" style="left:362.59px;top:896px;line-height:20px;font-size:8.8px;color:#2b2b2b;">6</div><div class="tx" style="left:413.64px;top:896px;line-height:20px;font-size:8.8px;color:#2b2b2b;">12</div><div class="tx" style="left:467.18px;top:896px;line-height:20px;font-size:8.8px;color:#2b2b2b;">18</div><div class="tx" style="left:576.88px;top:896px;line-height:20px;font-size:8.8px;color:#2b2b2b;">6</div><div class="tx" style="left:627.92px;top:896px;line-height:20px;font-size:8.8px;color:#2b2b2b;">12</div><div class="tx" style="left:681.46px;top:896px;line-height:20px;font-size:8.8px;color:#2b2b2b;">18</div><div class="tx" style="left:791.17px;top:896px;line-height:20px;font-size:8.8px;color:#2b2b2b;">6</div><div class="tx" style="left:842.21px;top:896px;line-height:20px;font-size:8.8px;color:#2b2b2b;">12</div><div class="tx" style="left:895.75px;top:896px;line-height:20px;font-size:8.8px;color:#2b2b2b;">18</div><div class="tx" style="left:1005.45px;top:896px;line-height:20px;font-size:8.8px;color:#2b2b2b;">6</div><div class="tx" style="left:1056.49px;top:896px;line-height:20px;font-size:8.8px;color:#2b2b2b;">12</div><div class="tx" style="left:1110.03px;top:896px;line-height:20px;font-size:8.8px;color:#2b2b2b;">18</div><div class="tx" style="left:1219.74px;top:896px;line-height:20px;font-size:8.8px;color:#2b2b2b;">6</div><div class="tx" style="left:1270.78px;top:896px;line-height:20px;font-size:8.8px;color:#2b2b2b;">12</div><div class="tx" style="left:1324.32px;top:896px;line-height:20px;font-size:8.8px;color:#2b2b2b;">18</div><div class="tx" style="left:1434.02px;top:896px;line-height:20px;font-size:8.8px;color:#2b2b2b;">6</div><div class="tx" style="left:1485.06px;top:896px;line-height:20px;font-size:8.8px;color:#2b2b2b;">12</div><div class="tx" style="left:1538.60px;top:896px;line-height:20px;font-size:8.8px;color:#2b2b2b;">18</div><div class="tx" style="left:1648.31px;top:896px;line-height:20px;font-size:8.8px;color:#2b2b2b;">6</div><div class="tx" style="left:1699.35px;top:896px;line-height:20px;font-size:8.8px;color:#2b2b2b;">12</div><div class="tx" style="left:1752.89px;top:896px;line-height:20px;font-size:8.8px;color:#2b2b2b;">18</div><div class="tx" style="left:311.16px;top:916px;line-height:20px;font-size:9px;color:#2b2b2b;letter-spacing:-0.011px;">Donnerstag</div><div class="tx" style="left:525.45px;top:916px;line-height:20px;font-size:9px;color:#2b2b2b;letter-spacing:0.115px;">Freitag</div><div class="tx" style="left:740.07px;top:916px;line-height:20px;font-size:9px;color:#2b2b2b;letter-spacing:-0.010px;">Samstag</div><div class="tx" style="left:954.35px;top:916px;line-height:20px;font-size:9px;color:#2b2b2b;letter-spacing:-0.006px;">Sonntag</div><div class="tx" style="left:1168.30px;top:916px;line-height:20px;font-size:9px;color:#2b2b2b;letter-spacing:0.170px;">Montag</div><div class="tx" style="left:1382.59px;top:916px;line-height:20px;font-size:9px;color:#2b2b2b;letter-spacing:-0.018px;">Dienstag</div><div class="tx" style="left:1596.88px;top:916px;line-height:20px;font-size:9px;color:#2b2b2b;letter-spacing:0.350px;">Mittwoch</div>
<div class="tx" style="left:272.48px;top:261px;line-height:27px;font-size:15px;color:#3f464c;font-weight:bold;letter-spacing:-0.393px;">Störabstandsmarge Empfangsrichtung (dB)</div>
<div class="tx" style="left:271.92px;top:489px;line-height:27px;font-size:15px;color:#3f464c;font-weight:bold;letter-spacing:-0.326px;">nicht behebbare Fehler</div>
<div class="tx" style="left:272.48px;top:717px;line-height:27px;font-size:15px;color:#3f464c;font-weight:bold;letter-spacing:-0.324px;">Synchronisationen</div>
<div class="tx" style="left:272.22px;top:951px;line-height:27px;font-size:15.5px;color:#3f464c;letter-spacing:0.149px;">Zeitraum</div>
<div class="abs" style="left:396px;top:955px;width:19.6px;height:19.6px;border:2.2px solid #333;border-radius:50%"></div>
<div class="tx" style="left:420.34px;top:951px;line-height:27px;font-size:15.2px;color:#3f464c;letter-spacing:0.019px;">24 Stunden</div>
<div id="foot"></div>
<div class="abs" style="left:396px;top:987px;width:19.6px;height:19.6px;border:2.2px solid #d3e7f7;border-radius:50%"></div>
<div class="abs" style="left:401px;top:992px;width:9.6px;height:9.6px;background:#c3dff5;border-radius:50%"></div>
<div class="tx" style="left:420.64px;top:983px;line-height:27px;font-size:15.2px;color:#d9d9d9;letter-spacing:-0.380px;">1 Woche</div>
<div class="abs" style="left:1702px;top:990px;width:121px;height:32px;background:#288fe2"></div>
<div class="tx" style="left:1718.17px;top:993px;line-height:27px;font-size:15.4px;color:#fff;letter-spacing:0.088px;">Aktualisieren</div>
<div id="sub"></div>
<div class="tx" style="left:272.35px;top:143px;line-height:41px;font-size:28px;color:#fff;font-weight:bold;letter-spacing:-0.533px;">FRITZ!Box 7430</div>
<div class="tx" style="left:1480.30px;top:151px;line-height:26px;font-size:14.6px;color:#fff;letter-spacing:-0.161px;">FRITZ!NAS</div>
<div class="tx" style="left:1617.50px;top:151px;line-height:26px;font-size:14.6px;color:#fff;letter-spacing:0.049px;">MyFRITZ!</div>
<div class="tx" style="left:1797.64px;top:151px;line-height:26px;font-size:14.6px;color:#fff;letter-spacing:-0.074px;">Siun</div>
<svg class="abs" style="left:1833px;top:153px" width="10" height="20" viewBox="0 0 10 20"><circle cx="4.500" cy="3.700" r="2.300" fill="#fff"/><circle cx="4.500" cy="10" r="2.300" fill="#fff"/><circle cx="4.500" cy="16.200" r="2.300" fill="#fff"/></svg>
<div class="tx" style="left:272.62px;top:195px;line-height:30px;font-size:17.2px;color:#fff;letter-spacing:0.368px;">Internet</div>
<svg class="abs" style="left:340px;top:202px" width="10" height="16" viewBox="0 0 10 16"><path d="M1.600 1.200L8.300 8L1.600 14.800" fill="none" stroke="#fff" stroke-width="1.400"/></svg>
<div class="tx" style="left:353.59px;top:195px;line-height:30px;font-size:17.2px;color:#fff;letter-spacing:0.028px;">DSL-Informationen</div>
<svg class="abs" style="left:1799px;top:194px" width="30" height="30" viewBox="0 0 30 30"><circle cx="14.600" cy="14.400" r="12.300" fill="none" stroke="#fff" stroke-width="1.700"/><text x="14.700" y="21.300" text-anchor="middle" font-family="Liberation Sans" font-weight="bold" font-size="19" fill="#fff">?</text></svg>
<div class="abs" style="left:274px;top:233px;width:113px;height:34px;background:#0470c5"></div>
<div class="tx" style="left:297.21px;top:234px;line-height:27px;font-size:15.5px;color:#7cc0f2;letter-spacing:0.054px;">Übersicht</div>
<div class="abs" style="left:395px;top:233px;width:96px;height:34px;background:#0470c5"></div>
<div class="tx" style="left:429.53px;top:234px;line-height:27px;font-size:15.5px;color:#7cc0f2;letter-spacing:-1.582px;">DSL</div>
<div class="abs" style="left:499px;top:233px;width:115px;height:34px;background:#0470c5"></div>
<div class="tx" style="left:522.70px;top:234px;line-height:27px;font-size:15.5px;color:#7cc0f2;letter-spacing:0.240px;">Spektrum</div>
<div class="abs" style="left:622px;top:233px;width:103px;height:34px;background:#0470c5"></div>
<div class="abs" style="left:622px;top:263.500px;width:103px;height:3.500px;background:#d8e62a"></div>
<div class="tx" style="left:645.70px;top:234px;line-height:27px;font-size:15.5px;color:#fff;letter-spacing:0.088px;">Statistik</div>
<div class="abs" style="left:733px;top:233px;width:144px;height:34px;background:#0470c5"></div>
<div class="tx" style="left:756.60px;top:234px;line-height:27px;font-size:15.5px;color:#7cc0f2;letter-spacing:0.157px;">Störsicherheit</div>
<div class="abs" style="left:885px;top:233px;width:113px;height:34px;background:#0470c5"></div>
<div class="tx" style="left:908.03px;top:234px;line-height:27px;font-size:15.5px;color:#7cc0f2;letter-spacing:-0.348px;">Feedback</div>
<div class="tx" style="left:10.20px;top:33px;line-height:25px;font-size:13.4px;color:#f9f9fa;letter-spacing:0.300px;"><u>F</u>ile</div>
<div class="tx" style="left:53.00px;top:33px;line-height:25px;font-size:13.4px;color:#f9f9fa;letter-spacing:0.101px;"><u>E</u>dit</div>
<div class="tx" style="left:99.45px;top:33px;line-height:25px;font-size:13.4px;color:#f9f9fa;letter-spacing:-0.194px;"><u>V</u>iew</div>
<div class="tx" style="left:149.30px;top:33px;line-height:25px;font-size:13.4px;color:#f9f9fa;letter-spacing:0.073px;">Hi<u>s</u>tory</div>
<div class="tx" style="left:213.40px;top:33px;line-height:25px;font-size:13.4px;color:#f9f9fa;letter-spacing:-0.093px;"><u>B</u>ookmarks</div>
<div class="tx" style="left:301.31px;top:33px;line-height:25px;font-size:13.4px;color:#f9f9fa;letter-spacing:0.250px;"><u>T</u>ools</div>
<div class="tx" style="left:355.30px;top:33px;line-height:25px;font-size:13.4px;color:#f9f9fa;letter-spacing:0.195px;"><u>H</u>elp</div>
<div class="tx" style="left:31.09px;top:63px;line-height:25px;font-size:13.5px;color:#f9f9fa;letter-spacing:-0.132px;">FRITZ!Box 7430</div>
<div class="tx" style="left:279.84px;top:99px;line-height:26px;font-size:13.9px;color:#f9f9fa;letter-spacing:0.139px;">192.168.1.1</div>
<div class="tx" style="left:1051.67px;top:99px;line-height:26px;font-size:13.9px;color:#b1b1b3;letter-spacing:0.356px;">Search</div>
<div id="side"></div>
<div class="abs" style="left:0;top:511px;width:240px;height:36px;background:#288fe2"></div>
<div class="abs" style="left:0;top:768px;width:240px;height:38px;background:#f3f2ee;border-top:1px solid #d9d7d0"></div>
<div class="tx" style="left:40.39px;top:259px;line-height:29px;font-size:17px;color:#3f464c;letter-spacing:0.203px;">Übersicht</div>
<div class="tx" style="left:40.58px;top:296px;line-height:29px;font-size:17px;color:#3f464c;font-weight:bold;letter-spacing:0.184px;">Internet</div>
<div class="tx" style="left:41.33px;top:553px;line-height:29px;font-size:17px;color:#3f464c;letter-spacing:0.259px;">Telefonie</div>
<div class="tx" style="left:40.31px;top:590px;line-height:29px;font-size:17px;color:#3f464c;letter-spacing:0.260px;">Heimnetz</div>
<div class="tx" style="left:41.63px;top:627px;line-height:29px;font-size:17px;color:#3f464c;letter-spacing:-1.589px;">WLAN</div>
<div class="tx" style="left:40.94px;top:664px;line-height:29px;font-size:17px;color:#3f464c;letter-spacing:0.112px;">Smart Home</div>
<div class="tx" style="left:40.31px;top:700px;line-height:29px;font-size:17px;color:#3f464c;letter-spacing:-0.098px;">Diagnose</div>
<div class="tx" style="left:40.94px;top:737px;line-height:29px;font-size:17px;color:#3f464c;letter-spacing:-0.062px;">System</div>
<div class="tx" style="left:41.67px;top:775px;line-height:29px;font-size:17px;color:#3f464c;letter-spacing:0.025px;">Assistenten</div>
<div class="tx" style="left:53.78px;top:332px;line-height:27px;font-size:15.4px;color:#3f464c;letter-spacing:0.221px;">Online-Monitor</div>
<div class="tx" style="left:54.02px;top:369px;line-height:27px;font-size:15.4px;color:#3f464c;letter-spacing:-0.128px;">Zugangsdaten</div>
<div class="tx" style="left:53.24px;top:406px;line-height:27px;font-size:15.4px;color:#3f464c;letter-spacing:0.158px;">Filter</div>
<div class="tx" style="left:53.24px;top:443px;line-height:27px;font-size:15.4px;color:#3f464c;letter-spacing:-0.062px;">Freigaben</div>
<div class="tx" style="left:53.24px;top:480px;line-height:27px;font-size:15.4px;color:#3f464c;letter-spacing:-0.409px;">MyFRITZ!-Konto</div>
<div class="tx" style="left:53.24px;top:516px;line-height:27px;font-size:15.4px;color:#ffffff;letter-spacing:0.056px;">DSL-Informationen</div>
<div class="tx" style="left:48.07px;top:946px;line-height:25px;font-size:13.6px;color:#a6a59f;letter-spacing:-0.134px;">Ansicht: Erweitert</div>
<div class="tx" style="left:162.85px;top:946px;line-height:25px;font-size:13.6px;color:#a6a59f;letter-spacing:0.716px;">Inhalt</div>
<div class="tx" style="left:51.88px;top:969px;line-height:25px;font-size:13.6px;color:#a6a59f;letter-spacing:0.198px;">Handbuch</div>
<div class="tx" style="left:126.18px;top:969px;line-height:25px;font-size:13.6px;color:#a6a59f;letter-spacing:-0.139px;">Rechtliches</div>
<div class="tx" style="left:15.60px;top:992px;line-height:25px;font-size:13.6px;color:#a6a59f;letter-spacing:-0.169px;">Tipps &amp; Tricks</div>
<div class="tx" style="left:109.88px;top:992px;line-height:25px;font-size:13.6px;color:#a6a59f;letter-spacing:0.198px;">Newsletter</div>
<div class="tx" style="left:187.73px;top:992px;line-height:25px;font-size:13.6px;color:#a6a59f;letter-spacing:0.015px;">avm.de</div>
<!-- FRITZ! logo : viewBox in 10.32x zoom coords, origin (50,133) -->
<svg class="abs" style="left:50px;top:133px" width="130" height="100" viewBox="0 0 1342 1032">
  <defs>
    <linearGradient id="ylw" x1="0" y1="0" x2="1" y2="1"><stop offset="0" stop-color="#fff36a"/><stop offset=".35" stop-color="#ffe800"/><stop offset="1" stop-color="#ffe000"/></linearGradient>
    
  </defs>
  <path d="M605 112L1000 492L622 905L208 497Z" fill="#111" stroke="#111" stroke-width="100" stroke-linejoin="round" transform="translate(14,14)"/>
  <path d="M605 112L1000 492L622 905L208 497Z" fill="url(#ylw)" stroke="url(#ylw)" stroke-width="100" stroke-linejoin="round"/>
  <path d="M598 110L330 350" stroke="#fffbd0" stroke-width="26" stroke-linecap="round" opacity=".85"/>
  <path d="M230 430L300 425" stroke="#fffbd0" stroke-width="30" stroke-linecap="round" opacity=".8"/>
  <g fill="#140000" transform="translate(17,14)">
      <path d="M105 322L280 318L283 388L218 392L218 438L268 436L270 500L218 503L218 632L108 636Z"/>
      <path d="M308 388L480 382L535 425L540 505L505 555L565 640L505 690L430 590L400 590L400 690L312 692Z M400 450L445 448L450 512L400 514Z" fill-rule="evenodd"/>
      <path d="M560 378L612 325L657 330L660 612L580 615L580 402Z"/>
      <path d="M665 385L905 380L905 450L835 452L835 690L740 692L740 455L665 458Z"/>
      <path d="M915 318L1130 315L1135 385L1010 535L1120 532L1120 610L895 612L895 545L1020 392L915 395Z"/>
      <path d="M1165 372L1238 362L1222 505L1160 510Z"/>
      <path d="M1190 518L1226 555L1190 592L1152 555Z"/>
    </g>
  <g fill="#e2101b" stroke="#a80010" stroke-width="5" stroke-linejoin="round">
      <path d="M105 322L280 318L283 388L218 392L218 438L268 436L270 500L218 503L218 632L108 636Z"/>
      <path d="M308 388L480 382L535 425L540 505L505 555L565 640L505 690L430 590L400 590L400 690L312 692Z M400 450L445 448L450 512L400 514Z" fill-rule="evenodd"/>
      <path d="M560 378L612 325L657 330L660 612L580 615L580 402Z"/>
      <path d="M665 385L905 380L905 450L835 452L835 690L740 692L740 455L665 458Z"/>
      <path d="M915 318L1130 315L1135 385L1010 535L1120 532L1120 610L895 612L895 545L1020 392L915 395Z"/>
      <path d="M1165 372L1238 362L1222 505L1160 510Z"/>
      <path d="M1190 518L1226 555L1190 592L1152 555Z"/>
    </g>
</svg>

<!-- sidebar icons, real pixel coordinates -->
<svg class="abs" style="left:0;top:255px" width="40" height="555" viewBox="0 255 40 555" fill="none" stroke="#a9bbc5" stroke-linejoin="round" stroke-linecap="round">
  <!-- home -->
  <path d="M10.200 280.200V269L19.500 262.800L28.800 269V280.200Z" stroke-width="2"/>
  <rect x="17" y="273.200" width="5" height="7" fill="#a9bbc5" stroke="none"/>
  <!-- globe -->
  <circle cx="19.700" cy="307.900" r="12.300" stroke-width="1.900"/>
  <path d="M13.500 305.500l2.500-2l4.500-.5l3 1.500l4.500 1l3 1.500l-2.500 3l-4 1.500l-2 4.500l-1.500 4.500l-2.500-1l-1-5.500l-2.500-2.500l-1.500-3z" fill="#a9bbc5" stroke="none"/>
  <path d="M17.500 297.500l5-1.500l5 2.500l3.500 4.500l0.500 3l-4-1.500l-4.500-.8l-2.500-2.300l-3 0.600l-1.500-2z" fill="#a9bbc5" stroke="none"/>
  <path d="M8.500 309.500l2.500 2.500l1 3.500l3 2l-1 1.500l-3.500-2.500l-2-4z" fill="#a9bbc5" stroke="none"/>
  <!-- chevron up -->
  <path d="M217.500 311.500" />
  <!-- phone -->
  <path d="M12.600 560.200c-.8 4.500 5.500 12 13.200 13.300" stroke-width="3.600"/>
  <path d="M12.800 559.500l0.300 3" stroke-width="5.400"/>
  <path d="M23 572l3.500 1.300" stroke-width="5.400"/>
  <!-- heimnetz -->
  <path d="M17.400 597v-5h14.400v9.800h-9" stroke-width="1.900" stroke-linejoin="miter" stroke-linecap="butt"/>
  <path d="M25 602.500v3.200h4.800" stroke-width="1.900" stroke-linejoin="miter" stroke-linecap="butt"/>
  <rect x="7.300" y="599.600" width="13.700" height="9.400" stroke-width="1.900" stroke-linejoin="miter"/>
  <path d="M14.200 609.500v3M9.300 612.700h10" stroke-width="2.200" stroke-linecap="butt"/>
  <!-- wlan -->
  <circle cx="19.400" cy="648" r="3" fill="#a9bbc5" stroke="none"/>
  <path d="M6.800 634.200a17.800 17.800 0 0 1 25.200 0" stroke-width="1.500"/>
  <path d="M9.600 637.600a13.800 13.800 0 0 1 19.600 0" stroke-width="1.500"/>
  <path d="M12.300 640.800a10 10 0 0 1 14.200 0" stroke-width="1.500"/>
  <path d="M15 643.800a6.200 6.200 0 0 1 8.800 0" stroke-width="1.500"/>
  <!-- smart home -->
  <path d="M10 684V673.500L19.400 667.400L28.800 673.500V684Z" stroke-width="2"/>
  <path d="M17 674.800a3.800 3.800 0 1 0 4.800 0" stroke-width="1.400"/>
  <path d="M19.400 673v4.300" stroke-width="1.400"/>
  <!-- diagnose -->
  <circle cx="14.600" cy="712" r="6.300" stroke-width="1.900"/>
  <path d="M20 716l10 3.500" stroke-width="3.400"/>
  <path d="M23 712.600h8.300" stroke-width="1.300"/>
  <path d="M9.500 712.500h2.500l1.300-2.800l2 5l1.300-2.200h2.500" stroke-width="1"/>
  <!-- system -->
  <circle cx="19.300" cy="750" r="3.900" fill="#a9bbc5" stroke="none"/>
  <circle cx="19.300" cy="750" r="9.400" stroke-width="1.700" stroke-dasharray="11.500 3.260" stroke-dashoffset="5.750" stroke-linecap="butt"/>
  <!-- assistenten -->
  <path d="M28.500 779v17.200" stroke-width="1.400" stroke-linecap="butt"/>
  <path d="M27.800 779.200v8.800l-7.400-4.600z" fill="#a9bbc5" stroke="none"/>
  <path d="M10 789.800h4.800l2.600 3.600l-2.600 3.600h-4.800l2-3.600z" fill="#a9bbc5" stroke="none"/>
  <path d="M18.300 789.800h4.800l2.600 3.600l-2.600 3.600h-4.800l2-3.600z" fill="#a9bbc5" stroke="none"/>
</svg>
<svg class="abs" style="left:214px;top:301px" width="22" height="14" viewBox="0 0 22 14"><path d="M3.300 10.700L10.700 3.900L18.100 10.700" fill="none" stroke="#3f464c" stroke-width="1.300"/></svg>
<!-- mouse cursor -->
<svg class="abs" style="left:1100px;top:758px" width="24" height="24" viewBox="1100 758 24 24"><path d="M1108 762.700V774.200L1110.600 771.700L1113.300 777L1115.600 776L1112.800 770.800L1116.300 770.700Z" fill="#000"/></svg>

<div id="scroll"></div><div id="thumb"></div>

</body>
</html>
